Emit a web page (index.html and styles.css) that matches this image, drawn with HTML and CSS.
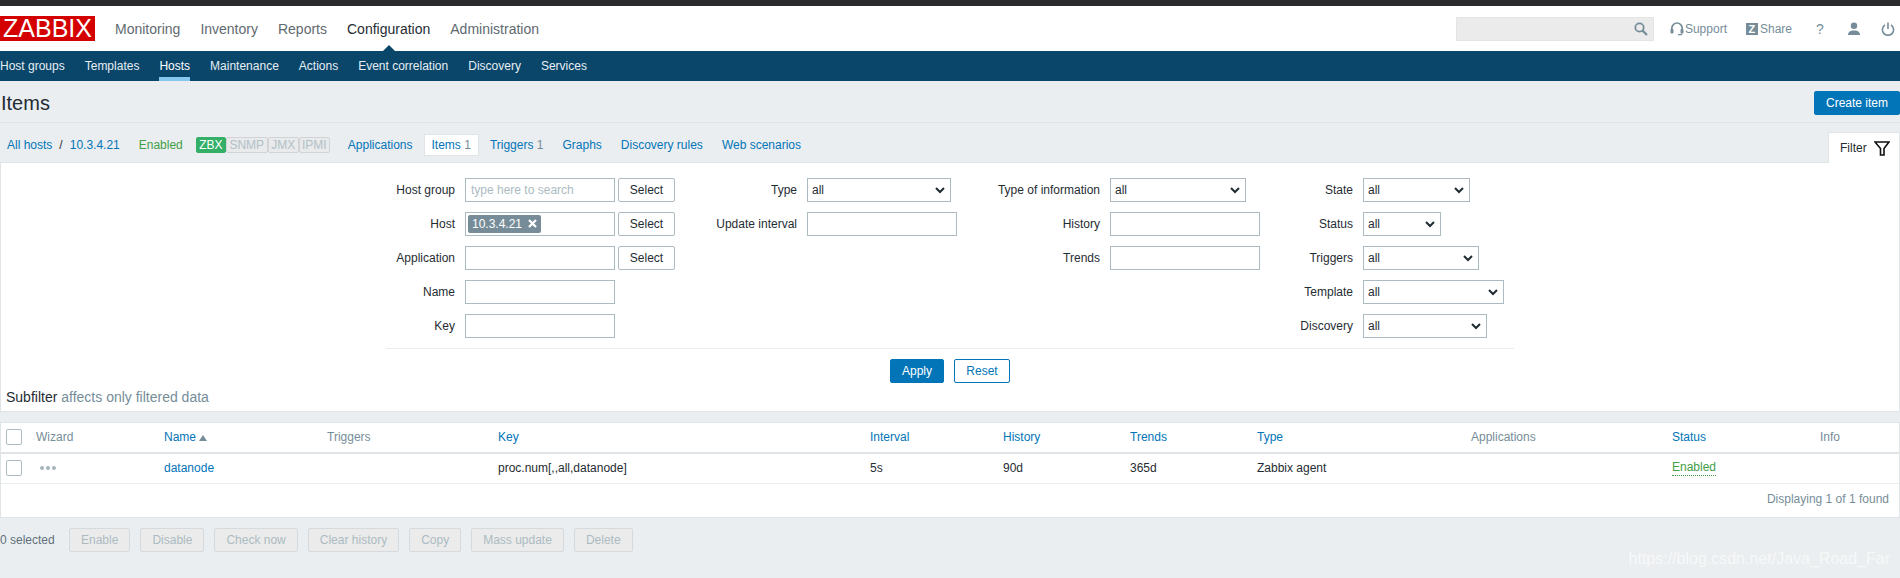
FILE: index.html
```html
<!DOCTYPE html>
<html lang="en">
<head>
  <meta charset="UTF-8">
  <title>Configuration of items</title>
  <link rel="stylesheet" href="styles.css">
</head>
<body>
  <header class="topbar">
    <div class="logo">ZABBIX</div>
    <nav class="main-nav">
      <a href="#">Monitoring</a>
      <a href="#">Inventory</a>
      <a href="#">Reports</a>
      <a href="#" class="active">Configuration</a>
      <a href="#">Administration</a>
    </nav>
    <div class="top-right">
      <div class="search">
        <svg width="14" height="14" viewBox="0 0 14 14"><circle cx="5.5" cy="5.5" r="4.2" fill="none" stroke="#768d99" stroke-width="1.8"/><path d="M8.6 8.6L13 13" stroke="#768d99" stroke-width="2.2"/></svg>
      </div>
      <a href="#" class="top-link support">
        <svg width="14" height="14" viewBox="0 0 14 14"><path d="M1.8 8V6.2a5.2 5.2 0 0 1 10.4 0V8" fill="none" stroke="#768d99" stroke-width="1.7"/><rect x="0.5" y="7" width="3" height="4.5" rx="1" fill="#768d99"/><rect x="10.5" y="7" width="3" height="4.5" rx="1" fill="#768d99"/><path d="M11.5 11.5V12.6H8" fill="none" stroke="#768d99" stroke-width="1.2"/></svg>
        Support
      </a>
      <a href="#" class="top-link share"><span class="z-badge">Z</span>Share</a>
      <a href="#" class="top-icon help">?</a>
      <a href="#" class="top-icon user">
        <svg width="14" height="14" viewBox="0 0 14 14"><circle cx="7" cy="3.8" r="3.2" fill="#768d99"/><path d="M1 13c0-3 2.5-4.4 6-4.4s6 1.4 6 4.4z" fill="#768d99"/></svg>
      </a>
      <a href="#" class="top-icon power">
        <svg width="14" height="14" viewBox="0 0 14 14"><path d="M4 3a5.6 5.6 0 1 0 6 0" fill="none" stroke="#768d99" stroke-width="1.6"/><path d="M7 0.5V7" stroke="#768d99" stroke-width="1.6"/></svg>
      </a>
    </div>
  </header>

  <nav class="sub-nav">
    <a href="#">Host groups</a>
    <a href="#">Templates</a>
    <a href="#" class="active">Hosts</a>
    <a href="#">Maintenance</a>
    <a href="#">Actions</a>
    <a href="#">Event correlation</a>
    <a href="#">Discovery</a>
    <a href="#">Services</a>
  </nav>

  <div class="title-row">
    <h1>Items</h1>
    <button class="btn-primary create">Create item</button>
  </div>

  <div class="tab-bar">
    <a href="#" class="crumb">All hosts</a>
    <span class="crumb-sep">/</span>
    <a href="#">10.3.4.21</a>
    <span class="host-status">Enabled</span>
    <div class="badges">
      <span class="badge on zbx">ZBX</span><span class="badge snmp">SNMP</span><span class="badge jmx">JMX</span><span class="badge ipmi">IPMI</span>
    </div>
    <a href="#" class="tab-apps">Applications</a>
    <span class="tab-current"><a href="#">Items</a> 1</span>
    <span class="tab-trig"><a href="#">Triggers</a> <span class="count">1</span></span>
    <a href="#" class="tab-link">Graphs</a>
    <a href="#" class="tab-link">Discovery rules</a>
    <a href="#" class="tab-link">Web scenarios</a>
    <div class="filter-tab">
      Filter
      <svg width="16" height="15" viewBox="0 0 16 15"><path d="M1 1H15L10 7.5V14H6.5V7.5z" fill="none" stroke="#111" stroke-width="1.6"/></svg>
    </div>
  </div>

  <section class="filter-panel">
    <div class="filter-form">
      <div class="filter-col col-a">
        <label>Host group</label>
        <div class="field-pair"><input type="text" placeholder="type here to search"><button class="btn-alt">Select</button></div>
        <label>Host</label>
        <div class="field-pair">
          <div class="multi"><span class="tag">10.3.4.21 <svg width="9" height="9" viewBox="0 0 9 9"><path d="M1 1L8 8M8 1L1 8" stroke="#fff" stroke-width="2.2"/></svg></span></div>
          <button class="btn-alt">Select</button>
        </div>
        <label>Application</label>
        <div class="field-pair"><input type="text"><button class="btn-alt">Select</button></div>
        <label>Name</label>
        <input type="text">
        <label>Key</label>
        <input type="text">
      </div>

      <div class="filter-col col-b">
        <label>Type</label>
        <div class="select sel-type">all<svg class="chev" width="10" height="7" viewBox="0 0 10 7"><path d="M1 1L5 5L9 1" fill="none" stroke="#1f2c33" stroke-width="2"/></svg></div>
        <label>Update interval</label>
        <input type="text">
      </div>

      <div class="filter-col col-c">
        <label>Type of information</label>
        <div class="select sel-info">all<svg class="chev" width="10" height="7" viewBox="0 0 10 7"><path d="M1 1L5 5L9 1" fill="none" stroke="#1f2c33" stroke-width="2"/></svg></div>
        <label>History</label>
        <input type="text">
        <label>Trends</label>
        <input type="text">
      </div>

      <div class="filter-col col-d">
        <label>State</label>
        <div class="select sel-state">all<svg class="chev" width="10" height="7" viewBox="0 0 10 7"><path d="M1 1L5 5L9 1" fill="none" stroke="#1f2c33" stroke-width="2"/></svg></div>
        <label>Status</label>
        <div class="select sel-status">all<svg class="chev" width="10" height="7" viewBox="0 0 10 7"><path d="M1 1L5 5L9 1" fill="none" stroke="#1f2c33" stroke-width="2"/></svg></div>
        <label>Triggers</label>
        <div class="select sel-triggers">all<svg class="chev" width="10" height="7" viewBox="0 0 10 7"><path d="M1 1L5 5L9 1" fill="none" stroke="#1f2c33" stroke-width="2"/></svg></div>
        <label>Template</label>
        <div class="select sel-template">all<svg class="chev" width="10" height="7" viewBox="0 0 10 7"><path d="M1 1L5 5L9 1" fill="none" stroke="#1f2c33" stroke-width="2"/></svg></div>
        <label>Discovery</label>
        <div class="select sel-discovery">all<svg class="chev" width="10" height="7" viewBox="0 0 10 7"><path d="M1 1L5 5L9 1" fill="none" stroke="#1f2c33" stroke-width="2"/></svg></div>
      </div>
    </div>

    <div class="filter-actions">
      <button class="btn-primary apply">Apply</button>
      <button class="btn-outline">Reset</button>
    </div>

    <p class="subfilter">Subfilter <span>affects only filtered data</span></p>
  </section>

  <section class="list-panel">
    <table>
      <colgroup>
        <col class="c-check"><col class="c-wizard"><col class="c-name"><col class="c-triggers"><col class="c-key">
        <col class="c-interval"><col class="c-history"><col class="c-trends"><col class="c-type"><col class="c-apps">
        <col class="c-status"><col class="c-info">
      </colgroup>
      <thead>
        <tr>
          <th><span class="checkbox"></span></th>
          <th>Wizard</th>
          <th><a href="#">Name</a> <span class="sort-up"></span></th>
          <th>Triggers</th>
          <th><a href="#">Key</a></th>
          <th><a href="#">Interval</a></th>
          <th><a href="#">History</a></th>
          <th><a href="#">Trends</a></th>
          <th><a href="#">Type</a></th>
          <th>Applications</th>
          <th><a href="#">Status</a></th>
          <th>Info</th>
        </tr>
      </thead>
      <tbody>
        <tr>
          <td><span class="checkbox"></span></td>
          <td><span class="dots"><i></i><i></i><i></i></span></td>
          <td><a href="#">datanode</a></td>
          <td></td>
          <td>proc.num[,,all,datanode]</td>
          <td>5s</td>
          <td>90d</td>
          <td>365d</td>
          <td>Zabbix agent</td>
          <td></td>
          <td><a href="#" class="status-on">Enabled</a></td>
          <td></td>
        </tr>
      </tbody>
    </table>
    <div class="list-footer">Displaying 1 of 1 found</div>
  </section>

  <div class="action-bar">
    <span class="selected-count">0 selected</span>
    <button disabled>Enable</button>
    <button disabled>Disable</button>
    <button disabled>Check now</button>
    <button disabled>Clear history</button>
    <button disabled>Copy</button>
    <button disabled>Mass update</button>
    <button disabled>Delete</button>
  </div>

  <!-- image host watermark -->
  <div class="watermark">https://blog.csdn.net/Java_Road_Far</div>
</body>
</html>
```
FILE: styles.css
```css
* {
  box-sizing: border-box;
}

body {
  margin: 0;
  height: 578px;
  overflow: hidden;
  position: relative;
  background-color: #ebeef0;
  color: #1f2c33;
  font-family: "Liberation Sans", Arial, sans-serif;
  font-size: 12px;
  border-top: 6px solid #2b2b2d;
}

a {
  color: #0275b8;
  text-decoration: none;
}

button, input {
  font-family: inherit;
  font-size: 12px;
}

/* top bar */
.topbar {
  height: 45px;
  background-color: white;
  display: flex;
  align-items: center;
}

.logo {
  width: 95px;
  height: 25px;
  background-color: #d40000;
  color: white;
  font-size: 25px;
  line-height: 25px;
  text-align: center;
}

.main-nav {
  display: flex;
  gap: 20px;
  margin-left: 20px;
  font-size: 14px;
}

.main-nav a {
  color: #5f6a70;
}

.main-nav a.active {
  color: #1f2c33;
  position: relative;
}

.main-nav a.active::after {
  content: "";
  position: absolute;
  left: 50%;
  bottom: -15px;
  margin-left: -7px;
  border-left: 7px solid transparent;
  border-right: 7px solid transparent;
  border-bottom: 7px solid #0a466a;
}

.top-right {
  display: flex;
  align-items: center;
  margin-left: auto;
  color: #768d99;
}

.search {
  width: 198px;
  height: 24px;
  background-color: #ebebeb;
  border: 1px solid #e4e4e4;
  display: flex;
  align-items: center;
  justify-content: flex-end;
  padding-right: 5px;
}

.top-link {
  display: flex;
  align-items: center;
  color: #768d99;
}

.support {
  margin-left: 16px;
  gap: 1px;
}

.share {
  margin-left: 19px;
  gap: 2px;
}

.z-badge {
  width: 12px;
  height: 12px;
  background-color: #768d99;
  color: white;
  font-size: 11px;
  line-height: 12px;
  font-weight: bold;
  text-align: center;
}

.top-icon {
  display: flex;
  color: #768d99;
}

.help {
  font-size: 14px;
  margin-left: 24px;
  width: 8px;
}

.user {
  margin-left: 23px;
}

.power {
  margin-left: 20px;
  margin-right: 5px;
}

/* second level nav */
.sub-nav {
  height: 30px;
  background-color: #0a466a;
  display: flex;
  gap: 20px;
}

.sub-nav a {
  color: #e6eef3;
  line-height: 30px;
  height: 30px;
}

.sub-nav a.active {
  color: white;
  border-bottom: 4px solid #86c6ef;
}

/* page title */
.title-row {
  height: 42px;
  border-bottom: 1px solid #dfe4e7;
  display: flex;
  align-items: center;
  justify-content: space-between;
  padding: 3px 0 0 1px;
}

h1 {
  margin: 0;
  font-size: 20px;
  font-weight: normal;
}

.btn-primary {
  height: 24px;
  background-color: #0275b8;
  color: white;
  border: 1px solid #0275b8;
  border-radius: 2px;
}

.create {
  width: 86px;
  padding: 0;
}

/* tabs line */
.tab-bar {
  height: 40px;
  display: flex;
  align-items: center;
  padding: 4px 0 0 7px;
  border-bottom: 1px solid #dfe4e7;
}

.crumb-sep {
  margin: 0 7px;
}

.host-status {
  color: #429e47;
  margin-left: 19px;
}

.badges {
  display: flex;
  margin-left: 13px;
  margin-right: 18px;
}

.badge {
  height: 16px;
  line-height: 14px;
  border: 1px solid #d0d4d7;
  background-color: #e8eaeb;
  color: #b3c0c7;
  border-radius: 2px;
  text-align: center;
}

.badge.on {
  background-color: #34af67;
  border-color: #34af67;
  color: white;
}

.zbx {
  width: 30px;
}

.snmp {
  width: 42px;
}

.jmx {
  width: 31px;
}

.ipmi {
  width: 31px;
}

.tab-current {
  background-color: white;
  border: 1px solid #dfe4e7;
  height: 22px;
  line-height: 20px;
  padding: 0 7px;
  margin: 0 11px 0 11px;
  color: #768d99;
}

.tab-trig .count {
  color: #768d99;
}

.tab-link {
  margin-left: 19px;
}

.filter-tab {
  margin-left: auto;
  align-self: flex-end;
  width: 72px;
  height: 31px;
  margin-bottom: -1px;
  background-color: white;
  border: 1px solid #dfe4e7;
  border-bottom: none;
  display: flex;
  align-items: center;
  justify-content: space-between;
  padding: 0 9px 0 11px;
}

/* filter */
.filter-panel {
  height: 249px;
  background-color: white;
  border: 1px solid #dfe4e7;
  border-top: none;
  padding-top: 15px;
  position: relative;
}

.filter-form {
  width: 1128px;
  margin-left: 385px;
  height: 171px;
  border-bottom: 1px solid #ebeef0;
  display: flex;
}

.filter-col {
  display: grid;
  row-gap: 10px;
  column-gap: 10px;
  grid-auto-rows: 24px;
  align-items: center;
  align-content: start;
  justify-items: start;
}

.filter-col label {
  justify-self: end;
}

.col-a {
  width: 314px;
  grid-template-columns: 69px 235px;
}

.col-b {
  width: 270px;
  grid-template-columns: 97px 163px;
}

.col-c {
  width: 300px;
  grid-template-columns: 130px 160px;
}

.col-d {
  width: 244px;
  grid-template-columns: 83px 151px;
}

.filter-col input, .multi {
  width: 150px;
  height: 24px;
  border: 1px solid #acbbc2;
  background-color: white;
  padding: 0 5px;
  color: #1f2c33;
}

.filter-col input::placeholder {
  color: #acbbc2;
  opacity: 1;
}

.field-pair {
  display: flex;
  gap: 3px;
}

.btn-alt {
  width: 57px;
  height: 24px;
  padding: 0;
  background-color: white;
  border: 1px solid #acbbc2;
  border-radius: 2px;
  color: #1f2c33;
}

.multi {
  padding: 2px 2px;
}

.tag {
  display: inline-block;
  height: 18px;
  line-height: 18px;
  padding: 0 4px;
  background-color: #768d99;
  color: white;
  border-radius: 2px;
}

.tag svg {
  margin-left: 3px;
}

.select {
  height: 24px;
  border: 1px solid #acbbc2;
  padding: 0 5px 0 4px;
  display: flex;
  align-items: center;
  justify-content: space-between;
}

.sel-type {
  width: 144px;
}

.sel-info {
  width: 136px;
}

.sel-state {
  width: 107px;
}

.sel-status {
  width: 78px;
}

.sel-triggers {
  width: 116px;
}

.sel-template {
  width: 141px;
}

.sel-discovery {
  width: 124px;
}

.filter-actions {
  display: flex;
  justify-content: center;
  gap: 10px;
  margin-top: 10px;
}

.apply {
  width: 54px;
  padding: 0;
}

.btn-outline {
  width: 56px;
  height: 24px;
  padding: 0;
  background-color: white;
  border: 1px solid #0275b8;
  border-radius: 2px;
  color: #0275b8;
}

.subfilter {
  margin: 6px 0 0 5px;
  font-size: 14px;
  line-height: 16px;
}

.subfilter span {
  color: #768d99;
}

/* item list */
.list-panel {
  margin-top: 10px;
  background-color: white;
  border: 1px solid #dfe4e7;
}

table {
  width: 100%;
  border-collapse: collapse;
  table-layout: fixed;
}

.c-check { width: 35px; }
.c-wizard { width: 128px; }
.c-name { width: 163px; }
.c-triggers { width: 171px; }
.c-key { width: 372px; }
.c-interval { width: 133px; }
.c-history { width: 127px; }
.c-trends { width: 127px; }
.c-type { width: 214px; }
.c-apps { width: 201px; }
.c-status { width: 148px; }
.c-info { width: 79px; }

th, td {
  padding: 0;
  text-align: left;
  font-weight: normal;
}

th:first-child, td:first-child {
  padding-left: 5px;
}

th {
  height: 30px;
  padding-bottom: 2px;
  color: #768d99;
  border-bottom: 2px solid #dfe4e7;
}

td {
  height: 30px;
  border-bottom: 1px solid #ebeef0;
}

.checkbox {
  display: block;
  width: 16px;
  height: 16px;
  border: 1px solid #acbbc2;
  border-radius: 2px;
}

.sort-up {
  display: inline-block;
  border-left: 4px solid transparent;
  border-right: 4px solid transparent;
  border-bottom: 6px solid #768d99;
}

.dots {
  display: flex;
  gap: 2px;
  margin-left: 4px;
}

.dots i {
  width: 4px;
  height: 4px;
  border-radius: 50%;
  background-color: #a5b4bc;
}

a.status-on {
  color: #429e47;
  border-bottom: 1px dotted #429e47;
  display: inline-block;
  line-height: 15px;
}

.list-footer {
  height: 33px;
  line-height: 31px;
  text-align: right;
  padding-right: 10px;
  color: #768d99;
}

/* mass actions */
.action-bar {
  display: flex;
  align-items: center;
  gap: 10px;
  margin-top: 10px;
}

.selected-count {
  width: 59px;
  color: #5f717b;
}

.action-bar button {
  height: 24px;
  padding: 0 11px;
  background-color: #ebebeb;
  border: 1px solid #d5dade;
  border-radius: 2px;
  color: #acbbc2;
}

/* sits over the picture, bottom right */
.watermark {
  position: absolute;
  right: 10px;
  bottom: 10px;
  color: rgba(255, 255, 255, 0.6);
  font-size: 16px;
}
```
